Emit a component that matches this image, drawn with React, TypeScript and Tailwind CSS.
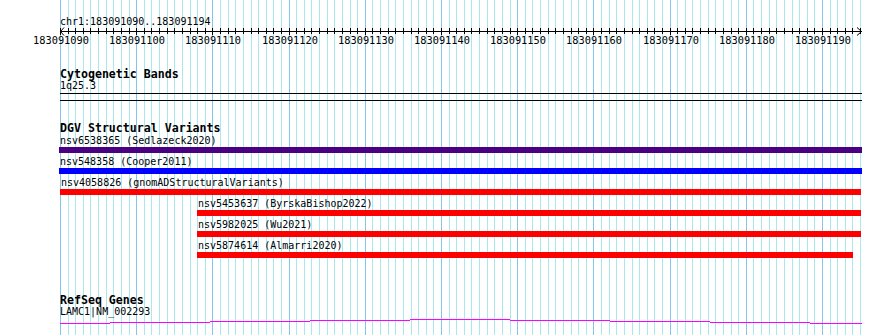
import React from "react";

const PX = 7.62;
const X0 = 60;
const N = 105;
const gx = (i: number) => Math.round(X0 + i * PX);

const mono = { fontFamily: '"DejaVu Sans Mono", "Liberation Mono", monospace' };

function Grid() {
  const lines = [];
  for (let i = 0; i <= N; i++) {
    const major = i % 10 === 0;
    lines.push(
      <line
        key={i}
        x1={gx(i) + 0.5}
        x2={gx(i) + 0.5}
        y1={0}
        y2={335}
        stroke={major ? "#82c6ee" : "#a8e8ee"}
        strokeWidth={1}
      />
    );
  }
  return (
    <svg className="absolute left-0 top-0 pointer-events-none" width={890} height={335} shapeRendering="crispEdges">
      {lines}
    </svg>
  );
}

function Ruler() {
  const ticks = [];
  const labels = [];
  for (let i = 0; i <= N; i++) {
    const major = i % 10 === 0;
    const x = gx(i) + 0.5;
    ticks.push(<line key={i} x1={x} x2={x} y1={28} y2={major ? 35 : 34} stroke="#000" />);
    if (major) {
      labels.push(
        <text key={i} x={gx(i) + 1} y={44} textAnchor="middle" fontSize={10.3} fill="#000" style={mono}>
          {183091090 + i}
        </text>
      );
    }
  }
  return (
    <svg width={890} height={50} className="block">
      <text x={60} y={25} fontSize={10} fill="#000" style={mono}>
        chr1:183091090..183091194
      </text>
      <g shapeRendering="crispEdges">
        <line x1={60} x2={862} y1={31.5} y2={31.5} stroke="#000" />
        {ticks}
      </g>
      <polyline points="64,27.5 60.5,31.5 64,35.5" fill="none" stroke="#000" />
      <polyline points="857,27.5 861.5,31.5 857,35.5" fill="none" stroke="#000" />
      {labels}
    </svg>
  );
}

function Title({ children, mt }: { children: React.ReactNode; mt: string }) {
  return (
    <div className={`${mt} h-[12px] leading-[12px] text-[11.6px] font-bold text-black whitespace-nowrap`} style={mono}>
      {children}
    </div>
  );
}

function Label({ children }: { children: React.ReactNode }) {
  return (
    <div className="h-[12px] leading-[12px] text-[10px] text-black whitespace-nowrap" style={mono}>
      {children}
    </div>
  );
}

type Feat = { label: string; color: string; left: number; right: number };

const feats: Feat[] = [
  { label: "nsv6538365 (Sedlazeck2020)", color: "#4b0082", left: 59, right: 862 },
  { label: "nsv548358 (Cooper2011)", color: "#0000ff", left: 59, right: 862 },
  { label: "nsv4058826 (gnomADStructuralVariants)", color: "#ff0000", left: 60, right: 861 },
  { label: "nsv5453637 (ByrskaBishop2022)", color: "#ff0000", left: 197, right: 861 },
  { label: "nsv5982025 (Wu2021)", color: "#ff0000", left: 197, right: 861 },
  { label: "nsv5874614 (Almarri2020)", color: "#ff0000", left: 197, right: 853 },
];

function Feature({ f }: { f: Feat }) {
  return (
    <div className="mb-[3px]" style={{ marginLeft: f.left - 59 }}>
      <div className="pl-px">
        <Label>{f.label}</Label>
      </div>
      <div className="h-[6px]" style={{ width: f.right - f.left, backgroundColor: f.color }} />
    </div>
  );
}

function GeneCurve() {
  const segs: [number, number, number][] = [
    [60, 110, 5],
    [110, 210, 4],
    [210, 310, 3],
    [310, 410, 2],
    [410, 510, 1],
    [510, 610, 2],
    [610, 710, 3],
    [710, 810, 4],
    [810, 862, 5],
  ];
  return (
    <svg width={803} height={7} className="block -ml-px" shapeRendering="crispEdges">
      {segs.map(([a, b, y], i) => (
        <line key={i} x1={a - 59} x2={b - 59} y1={y + 0.5} y2={y + 0.5} stroke="#ff00ff" />
      ))}
    </svg>
  );
}

export default function App() {
  return (
    <div className="relative w-[890px] h-[335px] bg-white overflow-hidden">
      <Grid />
      <div className="relative">
        <Ruler />
        <div className="pl-[59px]">
          <div className="pl-px">
            <Title mt="mt-[18px]">Cytogenetic Bands</Title>
            <Label>1q25.3</Label>
            <div className="mt-px h-[8px] w-[802px] border-t border-b border-black" />
            <Title mt="mt-[21px]">DGV Structural Variants</Title>
          </div>
          <div className="mt-px">
            {feats.map((f) => (
              <Feature key={f.label} f={f} />
            ))}
          </div>
          <div className="pl-px">
            <Title mt="mt-[36px]">RefSeq Genes</Title>
            <Label>LAMC1|NM_002293</Label>
            <GeneCurve />
          </div>
        </div>
      </div>
    </div>
  );
}
